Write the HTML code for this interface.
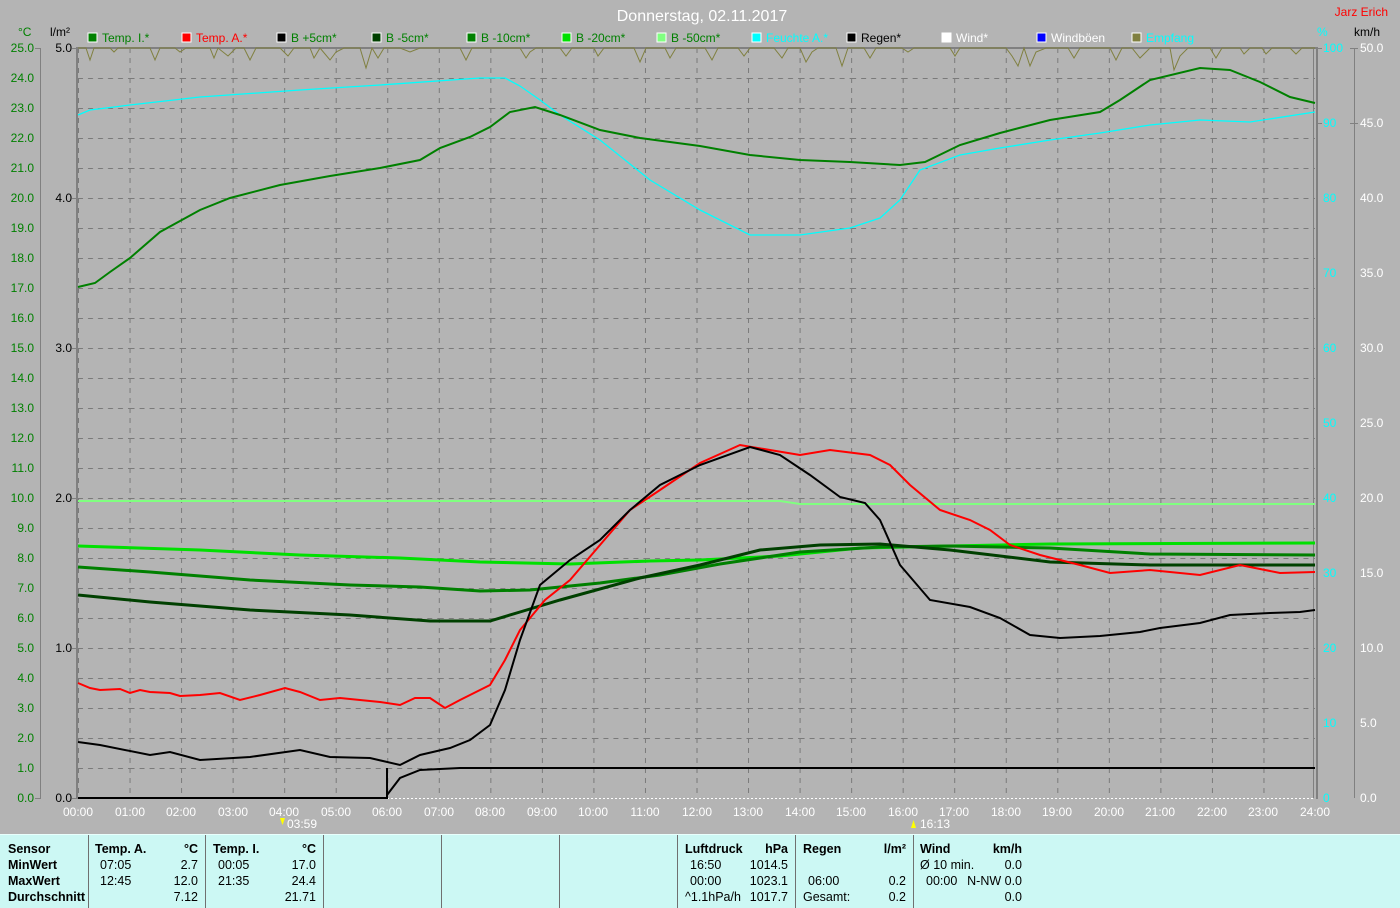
<!DOCTYPE html>
<html><head><meta charset="utf-8"><style>
body{margin:0;width:1400px;height:907px;background:#b4b4b4;overflow:hidden;font-family:"Liberation Sans Narrow","Liberation Sans",sans-serif}
svg{position:absolute;left:0;top:0}
text{font-family:"Liberation Sans Narrow","Liberation Sans",sans-serif;font-size:12px}
#tbl{position:absolute;left:0;top:834px;width:1400px;height:73px;background:#ccf8f4;border-top:1px solid #e8fffc}
.c{position:absolute;font-size:12.5px;color:#000;white-space:nowrap}
.b{font-weight:bold}
.sep{position:absolute;top:0;width:1px;height:73px;background:#707070}
</style></head><body>
<svg width="1400" height="834" viewBox="0 0 1400 834">
<defs>
<pattern id="g" x="78" y="48" width="51.542" height="30" patternUnits="userSpaceOnUse">
<line x1="0" y1="0.5" x2="51.542" y2="0.5" stroke="#7a7a7a" stroke-dasharray="5,5"/>
<line x1="0.5" y1="0" x2="0.5" y2="30" stroke="#7a7a7a" stroke-dasharray="5,5"/>
</pattern>
</defs>
<rect x="78" y="48" width="1237" height="750" fill="url(#g)"/>
<text x="702" y="21" fill="#fff" text-anchor="middle" style="font-size:16px">Donnerstag, 02.11.2017</text>
<text x="1388" y="16" fill="#f00" text-anchor="end">Jarz Erich</text>
<text x="18" y="36" fill="#008000">°C</text><text x="50" y="36" fill="#000">l/m²</text>
<text x="1317" y="36" fill="#0ff">%</text><text x="1354" y="36" fill="#000">km/h</text>
<g>
<rect x="88" y="33" width="9" height="9" fill="#008000" stroke="#fff"/><text x="102" y="42" fill="#008000">Temp. I.*</text>
<rect x="182" y="33" width="9" height="9" fill="#f00" stroke="#fff"/><text x="196" y="42" fill="#f00">Temp. A.*</text>
<rect x="277" y="33" width="9" height="9" fill="#000" stroke="#fff"/><text x="291" y="42" fill="#008000">B +5cm*</text>
<rect x="372" y="33" width="9" height="9" fill="#004000" stroke="#fff"/><text x="386" y="42" fill="#008000">B -5cm*</text>
<rect x="467" y="33" width="9" height="9" fill="#008000" stroke="#fff"/><text x="481" y="42" fill="#008000">B -10cm*</text>
<rect x="562" y="33" width="9" height="9" fill="#00e000" stroke="#fff"/><text x="576" y="42" fill="#008000">B -20cm*</text>
<rect x="657" y="33" width="9" height="9" fill="#80ff80" stroke="#fff"/><text x="671" y="42" fill="#008000">B -50cm*</text>
<rect x="752" y="33" width="9" height="9" fill="#0ff" stroke="#fff"/><text x="766" y="42" fill="#0ff">Feuchte A.*</text>
<rect x="847" y="33" width="9" height="9" fill="#000" stroke="#fff"/><text x="861" y="42" fill="#000">Regen*</text>
<rect x="942" y="33" width="9" height="9" fill="#fff" stroke="#fff"/><text x="956" y="42" fill="#fff">Wind*</text>
<rect x="1037" y="33" width="9" height="9" fill="#00f" stroke="#fff"/><text x="1051" y="42" fill="#fff">Windböen</text>
<rect x="1132" y="33" width="9" height="9" fill="#808040" stroke="#fff"/><text x="1146" y="42" fill="#0ff">Empfang</text>
</g>
<line x1="40.5" y1="48" x2="40.5" y2="798" stroke="#808080"/>
<line x1="1354.5" y1="48" x2="1354.5" y2="798" stroke="#808080"/>
<g stroke="#808080">
<line x1="35" y1="48.5" x2="41" y2="48.5"/><line x1="35" y1="798.5" x2="41" y2="798.5"/>
<line x1="72" y1="48.5" x2="78" y2="48.5"/><line x1="72" y1="198.5" x2="78" y2="198.5"/><line x1="72" y1="348.5" x2="78" y2="348.5"/><line x1="72" y1="498.5" x2="78" y2="498.5"/><line x1="72" y1="648.5" x2="78" y2="648.5"/><line x1="72" y1="798.5" x2="78" y2="798.5"/>
</g>
<g text-anchor="end" fill="#008000">
<text x="34" y="52">25.0</text><text x="34" y="82">24.0</text><text x="34" y="112">23.0</text><text x="34" y="142">22.0</text><text x="34" y="172">21.0</text><text x="34" y="202">20.0</text><text x="34" y="232">19.0</text><text x="34" y="262">18.0</text><text x="34" y="292">17.0</text><text x="34" y="322">16.0</text><text x="34" y="352">15.0</text><text x="34" y="382">14.0</text><text x="34" y="412">13.0</text><text x="34" y="442">12.0</text><text x="34" y="472">11.0</text><text x="34" y="502">10.0</text><text x="34" y="532">9.0</text><text x="34" y="562">8.0</text><text x="34" y="592">7.0</text><text x="34" y="622">6.0</text><text x="34" y="652">5.0</text><text x="34" y="682">4.0</text><text x="34" y="712">3.0</text><text x="34" y="742">2.0</text><text x="34" y="772">1.0</text><text x="34" y="802">0.0</text>
</g>
<g text-anchor="end" fill="#000">
<text x="72" y="52">5.0</text><text x="72" y="202">4.0</text><text x="72" y="352">3.0</text><text x="72" y="502">2.0</text><text x="72" y="652">1.0</text><text x="72" y="802">0.0</text>
</g>
<g fill="#0ff">
<text x="1323" y="52">100</text><text x="1323" y="127">90</text><text x="1323" y="202">80</text><text x="1323" y="277">70</text><text x="1323" y="352">60</text><text x="1323" y="427">50</text><text x="1323" y="502">40</text><text x="1323" y="577">30</text><text x="1323" y="652">20</text><text x="1323" y="727">10</text><text x="1323" y="802">0</text>
</g>
<g fill="#fff">
<text x="1360" y="52">50.0</text><text x="1360" y="127">45.0</text><text x="1360" y="202">40.0</text><text x="1360" y="277">35.0</text><text x="1360" y="352">30.0</text><text x="1360" y="427">25.0</text><text x="1360" y="502">20.0</text><text x="1360" y="577">15.0</text><text x="1360" y="652">10.0</text><text x="1360" y="727">5.0</text><text x="1360" y="802">0.0</text>
</g>
<g stroke="#808080"><line x1="1316" y1="48.5" x2="1322" y2="48.5"/><line x1="1316" y1="123.5" x2="1322" y2="123.5"/><line x1="1350" y1="48.5" x2="1358" y2="48.5"/><line x1="1350" y1="123.5" x2="1358" y2="123.5"/></g>
<g fill="#fff" text-anchor="middle">
<text x="78" y="816">00:00</text><text x="130" y="816">01:00</text><text x="181" y="816">02:00</text><text x="233" y="816">03:00</text><text x="284" y="816">04:00</text><text x="336" y="816">05:00</text><text x="387" y="816">06:00</text><text x="439" y="816">07:00</text><text x="490" y="816">08:00</text><text x="542" y="816">09:00</text><text x="593" y="816">10:00</text><text x="645" y="816">11:00</text><text x="697" y="816">12:00</text><text x="748" y="816">13:00</text><text x="800" y="816">14:00</text><text x="851" y="816">15:00</text><text x="903" y="816">16:00</text><text x="954" y="816">17:00</text><text x="1006" y="816">18:00</text><text x="1057" y="816">19:00</text><text x="1109" y="816">20:00</text><text x="1160" y="816">21:00</text><text x="1212" y="816">22:00</text><text x="1263" y="816">23:00</text><text x="1315" y="816">24:00</text>
<text x="302" y="828">03:59</text><text x="935" y="828">16:13</text>
</g>
<path d="M280 818 l5 0 -2.5 7 z" fill="#ff0"/><path d="M911 828 l5 0 -2.5 -8 z" fill="#ff0"/>
<line x1="78" y1="48" x2="1316" y2="48" stroke="#808080" stroke-width="2"/>
<line x1="77" y1="47" x2="77" y2="799" stroke="#808080" stroke-width="2"/>
<line x1="1313.5" y1="48" x2="1313.5" y2="798" stroke="#808080"/>
<line x1="1317" y1="47" x2="1317" y2="799" stroke="#808080" stroke-width="2"/>
<line x1="387" y1="798.5" x2="1315" y2="798.5" stroke="#fff" stroke-dasharray="2,2"/>
<polyline fill="none" stroke="#808040" points="78,48 86,48 90,60 94,48 110,48 114,52 118,48 150,48 155,60 160,48 175,48 180,52 186,48 210,48 214,58 218,48 228,56 236,48 244,48 250,60 256,48 280,48 288,56 294,48 310,48 314,58 320,48 330,60 336,52 344,48 360,48 366,68 372,48 378,58 384,48 400,48 410,52 420,48 460,48 466,60 472,48 520,48 526,58 530,52 536,48 560,48 566,56 572,48 594,48 598,56 604,48 634,48 640,62 646,48 665,48 670,58 676,48 705,48 712,60 718,48 738,48 744,56 750,48 774,48 782,58 788,48 800,48 806,62 812,52 818,48 836,48 842,66 848,48 864,48 870,58 876,48 902,48 908,52 914,48 950,48 955,56 960,48 1006,48 1012,56 1018,66 1024,48 1030,66 1036,52 1046,48 1068,48 1074,58 1080,48 1110,48 1116,60 1122,48 1132,48 1140,58 1150,48 1170,48 1174,70 1180,56 1188,48 1210,48 1216,58 1222,48 1240,48 1244,54 1250,48 1262,48 1266,54 1272,48 1290,48 1296,54 1302,48 1315,48"/>
<polyline fill="none" stroke="#80ff80" stroke-width="2" points="78,501 780,501 800,504 1315,504"/>
<polyline fill="none" stroke="#0ff" stroke-width="1.3" points="78,115 90,110 130,105 200,97 300,90 380,85 480,78 505,78 520,86 540,100 560,115 600,140 650,180 700,210 750,235 800,235 850,228 880,218 900,200 920,170 960,155 1000,148 1050,140 1100,133 1150,125 1200,120 1250,122 1315,112"/>
<polyline fill="none" stroke="#008000" stroke-width="2" points="78,287 95,283 110,272 130,258 160,232 200,210 230,198 280,185 330,176 380,168 420,160 440,148 470,137 490,127 510,112 535,107 560,115 600,130 640,138 700,146 750,155 800,160 850,162 900,165 925,162 960,145 1000,133 1050,120 1100,112 1120,100 1150,80 1200,68 1230,70 1260,82 1290,97 1315,103"/>
<polyline fill="none" stroke="#00e000" stroke-width="3" points="78,546 200,550 300,555 400,558 480,562 570,564 650,561 700,560 780,556 860,548 950,546 1000,545 1050,544 1315,543"/>
<polyline fill="none" stroke="#008000" stroke-width="3" points="78,567 150,572 250,580 350,585 420,587 480,591 530,590 600,583 660,575 720,564 800,552 880,547 950,546 1050,548 1150,554 1315,555"/>
<polyline fill="none" stroke="#004000" stroke-width="3" points="78,595 150,602 250,610 350,615 430,621 490,621 520,612 560,600 640,578 700,565 760,550 820,545 880,544 950,550 1050,562 1150,565 1315,565"/>
<polyline fill="none" stroke="#f00" stroke-width="2" points="78,683 90,688 100,690 120,689 130,693 140,690 150,692 170,693 180,696 200,695 220,693 240,700 260,695 285,688 300,692 320,700 340,698 360,700 380,702 400,705 415,698 430,698 445,708 460,700 470,695 490,685 505,660 520,630 545,600 570,580 600,545 630,510 660,490 700,463 740,445 770,450 800,455 830,450 870,455 890,465 910,485 940,510 970,520 990,530 1010,545 1040,555 1080,565 1110,573 1150,570 1200,575 1240,565 1280,573 1315,572"/>
<polyline fill="none" stroke="#000" stroke-width="2" points="78,742 100,745 150,755 170,752 200,760 250,757 300,750 330,757 370,758 400,765 420,755 450,748 470,740 490,725 505,690 520,640 540,585 570,560 600,540 630,510 660,485 700,465 750,447 780,455 810,475 840,497 865,503 880,520 900,565 930,600 970,607 1000,618 1030,635 1060,638 1100,636 1140,632 1160,628 1200,623 1230,615 1270,613 1300,612 1315,610"/>
<polyline fill="none" stroke="#000" stroke-width="2" points="78,798 387,798 387,768 387,795 400,778 420,770 460,768 1315,768"/>
</svg>
<div id="tbl">
<div class="sep" style="left:88px"></div><div class="sep" style="left:205px"></div><div class="sep" style="left:323px"></div><div class="sep" style="left:441px"></div><div class="sep" style="left:559px"></div><div class="sep" style="left:677px"></div><div class="sep" style="left:795px"></div><div class="sep" style="left:913px"></div>
<div class="c b" style="left:8px;top:7px">Sensor</div><div class="c b" style="left:8px;top:23px">MinWert</div><div class="c b" style="left:8px;top:39px">MaxWert</div><div class="c b" style="left:8px;top:55px">Durchschnitt</div>
<div class="c b" style="left:95px;top:7px">Temp. A.</div><div class="c b" style="right:1202px;top:7px">°C</div>
<div class="c" style="left:100px;top:23px">07:05</div><div class="c" style="right:1202px;top:23px">2.7</div>
<div class="c" style="left:100px;top:39px">12:45</div><div class="c" style="right:1202px;top:39px">12.0</div>
<div class="c" style="right:1202px;top:55px">7.12</div>
<div class="c b" style="left:213px;top:7px">Temp. I.</div><div class="c b" style="right:1084px;top:7px">°C</div>
<div class="c" style="left:218px;top:23px">00:05</div><div class="c" style="right:1084px;top:23px">17.0</div>
<div class="c" style="left:218px;top:39px">21:35</div><div class="c" style="right:1084px;top:39px">24.4</div>
<div class="c" style="right:1084px;top:55px">21.71</div>
<div class="c b" style="left:685px;top:7px">Luftdruck</div><div class="c b" style="right:612px;top:7px">hPa</div>
<div class="c" style="left:690px;top:23px">16:50</div><div class="c" style="right:612px;top:23px">1014.5</div>
<div class="c" style="left:690px;top:39px">00:00</div><div class="c" style="right:612px;top:39px">1023.1</div>
<div class="c" style="left:685px;top:55px">^1.1hPa/h</div><div class="c" style="right:612px;top:55px">1017.7</div>
<div class="c b" style="left:803px;top:7px">Regen</div><div class="c b" style="right:494px;top:7px">l/m²</div>
<div class="c" style="left:808px;top:39px">06:00</div><div class="c" style="right:494px;top:39px">0.2</div>
<div class="c" style="left:803px;top:55px">Gesamt:</div><div class="c" style="right:494px;top:55px">0.2</div>
<div class="c b" style="left:920px;top:7px">Wind</div><div class="c b" style="right:378px;top:7px">km/h</div>
<div class="c" style="left:920px;top:23px">Ø 10 min.</div><div class="c" style="right:378px;top:23px">0.0</div>
<div class="c" style="left:926px;top:39px">00:00</div><div class="c" style="right:378px;top:39px">N-NW 0.0</div>
<div class="c" style="right:378px;top:55px">0.0</div>
</div>
</body></html>
